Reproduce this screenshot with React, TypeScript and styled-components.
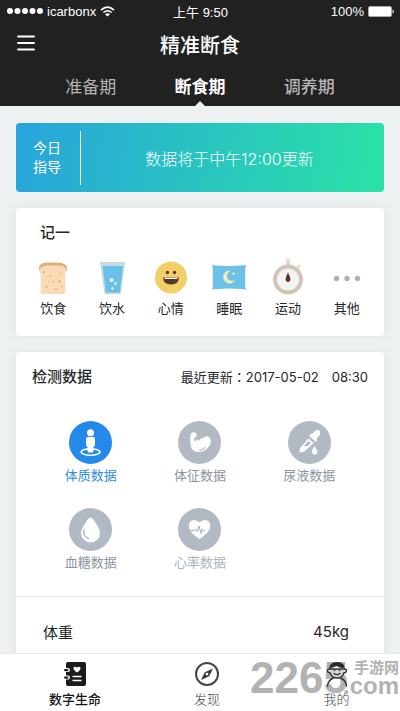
import React from "react";
import styled, { createGlobalStyle } from "styled-components";

const GlobalStyle = createGlobalStyle`
  * { box-sizing: border-box; }
  body {
    margin: 0;
    background: #edf1f2;
    font-family: "Liberation Sans", "Noto Sans CJK SC", sans-serif;
    color: #26272b;
  }
  button { font: inherit; color: inherit; background: none; border: 0; padding: 0; cursor: pointer; }
  h1, h2, p { margin: 0; }
  svg { display: block; }
`;

const Screen = styled.div`
  display: flex;
  flex-direction: column;
  height: 100vh;
`;

const Header = styled.header`
  flex: none;
  background: #212121;
  color: #fff;
`;

const StatusBar = styled.div`
  display: grid;
  grid-template-columns: 1fr auto 1fr;
  align-items: center;
  height: 22px;
  padding: 0 6px 0 7px;
  font-size: 13px;
`;

const StatusGroup = styled.div<{ $end?: boolean }>`
  display: flex;
  align-items: center;
  gap: 4px;
  justify-content: ${(p) => (p.$end ? "flex-end" : "flex-start")};
`;

const NavBar = styled.div`
  display: grid;
  grid-template-columns: 1fr auto 1fr;
  align-items: center;
  height: 48px;
  padding: 0 17px;
`;

const MenuButton = styled.button`
  justify-self: start;
  margin-bottom: 6px;
`;

const Title = styled.h1`
  font-size: 20px;
  line-height: 28px;
  font-weight: 500;
`;

const PhaseTabs = styled.nav`
  display: grid;
  grid-template-columns: repeat(3, 1fr);
  height: 36px;
  padding: 0 36px;
`;

const PhaseTab = styled.button<{ $active?: boolean; $strong?: boolean }>`
  && { color: ${(p) => (p.$active ? "#fff" : "#b4b4b4")}; }
  position: relative;
  font-size: 17px;
  line-height: 24px;
  font-weight: ${(p) => (p.$active ? 700 : p.$strong ? 500 : 400)};
  &::after {
    content: "";
    display: ${(p) => (p.$active ? "block" : "none")};
    position: absolute;
    bottom: 0;
    left: 50%;
    margin-left: -5px;
    border: 5px solid transparent;
    border-top: 0;
    border-bottom-color: #edf1f2;
  }
`;

const Content = styled.main`
  flex: 1;
  min-height: 0;
  overflow-y: auto;
  scrollbar-width: none;
  padding: 17px 16px;
  display: flex;
  flex-direction: column;
  gap: 16px;
`;

const Guide = styled.section`
  flex: none;
  display: flex;
  align-items: center;
  height: 69px;
  border-radius: 4px;
  color: #fff;
  background: linear-gradient(100deg, #28a4dc, #2ae0a8 96%);
`;

const GuideTitle = styled.h2`
  display: flex;
  align-items: center;
  justify-content: center;
  width: 65px;
  height: 54px;
  padding: 0 17px;
  border-right: 1px solid #fff;
  font-size: 14px;
  line-height: 19px;
  font-weight: 400;
`;

const GuideText = styled.p`
  flex: 1;
  padding-right: 6px;
  text-align: center;
  font-family: Inter, "Noto Sans CJK SC", sans-serif;
  font-size: 16px;
  font-weight: 300;
`;

const Card = styled.section`
  flex: none;
  background: #fff;
  border-radius: 4px;
  box-shadow: 0 0 12px rgba(60, 80, 90, 0.07);
`;

const QuickTitle = styled.h2`
  padding: 14px 24px 0;
  font-size: 15px;
  line-height: 22px;
  font-weight: 500;
`;

const QuickGrid = styled.div`
  display: grid;
  grid-template-columns: repeat(6, 1fr);
  padding: 15px 8px 17px;
`;

const QuickButton = styled.button`
  display: flex;
  flex-direction: column;
  align-items: center;
  gap: 2px;
  font-size: 13px;
  line-height: 20px;
`;

const DataHead = styled.div`
  display: flex;
  align-items: center;
  justify-content: space-between;
  padding: 14px 16px 0;
  line-height: 22px;
`;

const DataTitle = styled.h2`
  font-size: 15px;
  font-weight: 500;
`;

const Updated = styled.p`
  font-family: Inter, "Noto Sans CJK TC", sans-serif;
  font-size: 13px;
  white-space: pre;
`;

const DataGrid = styled.div`
  display: grid;
  grid-template-columns: repeat(3, 1fr);
  row-gap: 22px;
  padding: 33px 20px 23px;
`;

const DataButton = styled.button<{ $tone: string }>`
  && { color: ${(p) => p.$tone}; }
  display: flex;
  flex-direction: column;
  align-items: center;
  gap: 2px;
  font-size: 13px;
  line-height: 20px;
`;

const Disc = styled.span<{ $active?: boolean }>`
  width: 43px;
  height: 43px;
  border-radius: 50%;
  background: ${(p) => (p.$active ? "#2589eb" : "#b1b9c3")};
`;

const Measure = styled.div`
  display: flex;
  align-items: center;
  justify-content: space-between;
  height: 70px;
  padding: 0 35px 0 27px;
  border-top: 1px solid #e6e9eb;
  font-family: Inter, "Noto Sans CJK SC", sans-serif;
  font-size: 15px;
`;

const TabBar = styled.nav`
  position: relative;
  flex: none;
  display: grid;
  grid-template-columns: 132fr 132fr 127fr;
  height: 58px;
  padding-left: 9px;
  background: #fff;
  border-top: 1px solid #e6e9eb;
`;

const TabButton = styled.button<{ $active?: boolean }>`
  && { color: ${(p) => (p.$active ? "#151515" : "#444")}; }
  position: relative;
  z-index: 1;
  display: flex;
  flex-direction: column;
  align-items: center;
  padding-top: 7px;
  gap: 3px;
  font-size: 13px;
  line-height: 20px;
  font-weight: ${(p) => (p.$active ? 500 : 300)};
`;

const Watermark = styled.div`
  position: absolute;
  right: 1px;
  top: 4px;
  display: flex;
  color: #b2b2b2;
  font-weight: 700;
  pointer-events: none;
`;

const MarkNumber = styled.span`
  font-size: 44px;
  line-height: 40px;
`;

const MarkSide = styled.span`
  display: flex;
  flex-direction: column;
  padding-top: 2px;
  margin-left: -5px;
`;

const MarkName = styled.span`
  padding-left: 11px;
  font-size: 15px;
  line-height: 16px;
`;

const MarkDomain = styled.span`
  font-size: 24px;
  line-height: 20px;
`;

const Signal = () => (
  <svg width="36" height="8" viewBox="0 0 36 8" fill="#fff" aria-hidden="true">
    {[3, 10.5, 18, 25.5, 33].map((x) => (
      <circle key={x} cx={x} cy="4" r="3" />
    ))}
  </svg>
);

const Wifi = () => (
  <svg width="15" height="11" viewBox="0 0 15 11" fill="none" stroke="#fff" strokeWidth="1.6" aria-hidden="true">
    <path d="M1 4.1Q7.5-1.8 14 4.1M3.4 6.5Q7.5 3 11.6 6.5" />
    <path d="M7.5 10.6 5 8.2Q7.5 6.2 10 8.2Z" fill="#fff" stroke="none" />
  </svg>
);

const Battery = () => (
  <svg width="26" height="11" viewBox="0 0 26 11" aria-hidden="true">
    <rect x=".5" y=".5" width="23" height="10" rx="1.5" fill="#fff" stroke="#aaa" />
    <path d="M24.5 3.5q1.5 0 1.5 2t-1.5 2z" fill="#ccc" />
  </svg>
);

const MenuIcon = () => (
  <svg width="18" height="16" viewBox="0 0 18 16" stroke="#fff" strokeWidth="2" strokeLinecap="round" aria-hidden="true">
    <path d="M1 1.5h16M1 8h16M1 14.5h16" />
  </svg>
);

const Bread = () => (
  <svg width="38" height="38" viewBox="0 0 38 38" aria-hidden="true">
    <path d="M5 9Q5 4 13 3.500h11q9 .5 9 6 0 3-2 5H7q-2-2-2-5.500z" fill="#dcae7b" />
    <path d="M5.500 10.500Q7 7 14 6.500h11q6 .5 7.500 4-.2 3.500-1.500 5l.5 17q0 2.500-2.500 2.500H9q-2.500 0-2.500-2.500l.5-17q-1.500-1.500-1.500-5z" fill="#fadbb6" />
    <g fill="#dfac79">
      <circle cx="10" cy="13" r="1" /><circle cx="16" cy="17" r=".9" /><circle cx="27" cy="14" r=".8" />
      <circle cx="19.500" cy="22.500" r=".9" /><circle cx="25.500" cy="22.500" r="1.200" /><circle cx="12.500" cy="28" r="1.100" />
      <circle cx="22" cy="30.500" r=".9" /><circle cx="28" cy="27.500" r=".8" /><circle cx="14.500" cy="23" r=".6" />
    </g>
  </svg>
);

const Water = () => (
  <svg width="38" height="38" viewBox="0 0 38 38" aria-hidden="true">
    <path d="M7 3h25l-4 32H11.500z" fill="#c9d9e2" />
    <path d="M9.500 7h20.500L26.800 33.500H13z" fill="#68c0e8" />
    <g fill="#e3f5fd">
      <circle cx="18.500" cy="21" r="2" /><circle cx="22.500" cy="24.500" r="1.400" /><circle cx="19.500" cy="29.500" r="1.300" />
    </g>
  </svg>
);

const Smile = () => (
  <svg width="38" height="38" viewBox="0 0 38 38" aria-hidden="true">
    <circle cx="19" cy="18.500" r="16" fill="#f3cf68" />
    <g fill="#5d3526">
      <circle cx="15.500" cy="13.500" r="1.700" /><circle cx="22.500" cy="13.500" r="1.700" />
      <path d="M11 18.500h16q-.5 7-8 7t-8-7z" />
    </g>
    <path d="M12.200 18.800h13.600l-.6 1.200H12.800z" fill="#fff" />
  </svg>
);

const Pillow = () => (
  <svg width="38" height="38" viewBox="0 0 38 38" aria-hidden="true">
    <path d="M2 6l4 .5q13 .8 26 0l4-.5q-.3 3-1 4 .8 1 0 2.500.8 1.200 0 2.700.8 1.300 0 2.800.8 1.200 0 2.700.8 1.300 0 2.800.8 1.500 0 2.500l1 4.500-4-.5q-13-.8-26 0l-4 .5 1-4.500q-.8-1.200 0-2.500-.8-1.300 0-2.800-.8-1.200 0-2.700-.8-1.300 0-2.800-.8-1.200 0-2.700-.8-1.300 0-2.500z" fill="#6cc1e9" />
    <path d="M20.500 11.500a6.500 6.500 0 1 0 4.500 10q-7.500 1.500-8-4 0-4 3.500-6z" fill="#f3e9b6" />
    <path d="M23.500 12.500l.6 1.600 1.600.6-1.600.6-.6 1.600-.6-1.600-1.600-.6 1.600-.6z" fill="#f3e9b6" />
  </svg>
);

const Watch = () => (
  <svg width="38" height="38" viewBox="0 0 38 38" aria-hidden="true">
    <path d="M17 0h4v7h-4zM27 8l3-3 2 2-3 3z" fill="#e5ddd2" />
    <circle cx="19" cy="20.500" r="13" fill="#f4f4f5" stroke="#d1c4b4" strokeWidth="4" />
    <path d="M19 13.500q3 6 2.300 7.700-.6 1.800-2.300 1.800t-2.300-1.800Q16 19.500 19 13.500z" fill="#642f24" />
  </svg>
);

const Dots = () => (
  <svg width="38" height="38" viewBox="0 0 38 38" fill="#a9b2be" aria-hidden="true">
    <circle cx="8.500" cy="19.500" r="2.700" /><circle cx="19" cy="19.500" r="2.700" /><circle cx="29.500" cy="19.500" r="2.700" />
  </svg>
);

const Body = () => (
  <svg viewBox="0 0 43 43" aria-hidden="true">
    <ellipse cx="21.500" cy="31" rx="9.500" ry="3.300" fill="none" stroke="#fff" strokeWidth="1.500" />
    <circle cx="21.500" cy="11.800" r="3.500" fill="#fff" />
    <path d="M19 16h5q2 0 2 2v6q0 1.500-1.500 1.500V30q0 1.500-1.500 1.500h-3q-1.500 0-1.500-1.500v-4.500Q17 25.500 17 24v-6q0-2 2-2z" fill="#fff" />
  </svg>
);

const Muscle = () => (
  <svg viewBox="0 0 43 43" aria-hidden="true">
    <path d="M13 12.500q2-2 4.500-.8 2.200 1.500.8 3.800l-2 1.500q-.5 2 .7 3.500l2.500-2.500.5 2q2.500-3 6-3.500 3.500-2.500 6 .5 2 3.500-.5 7.500-4 6.500-10 6.500-7 0-8.500-5-1.500-7.500 0-13.500z" fill="#fff" />
    <path d="M21.500 29q3.500.3 5.500-2.500" fill="none" stroke="#b1b9c3" strokeWidth="1.200" strokeLinecap="round" />
  </svg>
);

const Dropper = () => (
  <svg viewBox="0 0 43 43" aria-hidden="true">
    <path d="M24.500 12.500l2.500-2.500q3-2 5 .2 1.200 2.300-.5 4.300l-3 3 .8 1.700-1.800 1.500-6.500-6 1.700-1.800z" fill="#fff" />
    <path d="M20.500 17.500l5 4.500-8.500 8q-2 1.500-4 1l-1 .7-.9-.8.7-1q-.5-2.400 1.200-4z" fill="#fff" />
    <path d="M20.700 20l2 2-3 3H15.700z" fill="#b1b9c3" />
    <path d="M26.500 25q3 4.500 3 5.700a2.800 2.800 0 0 1-5.600 0q0-1.500 2.600-5.700z" fill="#fff" />
  </svg>
);

const Drop = () => (
  <svg viewBox="0 0 43 43" aria-hidden="true">
    <path d="M21.500 9.500q2 0 5.500 6 4 6 4 9.500a9.500 9.500 0 0 1-19 0q0-3.500 4-9.500 3.500-6 5.500-6z" fill="#fff" />
    <path d="M15 21.500q-1.500 6.500 4.500 9" fill="none" stroke="#b1b9c3" strokeWidth="1.400" strokeLinecap="round" />
  </svg>
);

const Heart = () => (
  <svg viewBox="0 0 43 43" aria-hidden="true">
    <path d="M21.500 31Q11 24.500 10.700 18q0-5.700 5.300-6 3.500 0 5.500 2.500 2-2.500 5.500-2.500 5.300.3 5.300 6Q32 24.500 21.500 31z" fill="#fff" />
    <path d="M11 22.500h6l1-1.500 1.500 2.500 1.500-5.500 2 7.500 1.500-4.500.8 1.500H27" fill="none" stroke="#a9b2bd" strokeWidth="1" strokeLinejoin="round" />
  </svg>
);

const Notebook = () => (
  <svg width="26" height="26" viewBox="0 0 26 26" aria-hidden="true">
    <rect x="4" y="1" width="20" height="24" rx="2" fill="#1b1b1b" />
    {[7.5, 15].map((y) => (
      <g key={y}>
        <rect x="2" y={y - 0.5} width="6" height="4" rx="2" fill="#fff" />
        <rect x="2" y={y + 0.4} width="4.500" height="2.300" rx="1.100" fill="#1b1b1b" />
      </g>
    ))}
    <path d="M15 11.500q-4-2.500-3.500-4.700.8-2 3.500-.3 2.700-1.700 3.500.3.5 2.200-3.500 4.700z" fill="#fff" />
    <path d="M10.500 15.500h9M10.500 19.500h9" stroke="#fff" strokeWidth="1.500" />
  </svg>
);

const Compass = () => (
  <svg width="26" height="26" viewBox="0 0 26 26" aria-hidden="true">
    <circle cx="13" cy="13" r="11" fill="none" stroke="#444" strokeWidth="2" />
    <path fillRule="evenodd" d="M19 7.500l-3.800 7.700-8.200 3.800 3.800-7.700zM13 11.700a1.400 1.400 0 1 0 0 2.800 1.400 1.400 0 0 0 0-2.800z" fill="#3a3a3a" />
  </svg>
);

const Person = () => (
  <svg width="26" height="26" viewBox="0 0 26 26" fill="none" stroke="#333" strokeWidth="1.400" strokeLinecap="round" aria-hidden="true">
    <path d="M5.500 8q-2.300 0-2 2 .3 2 2.500 1.700Q8 17 13 17t7-5.300q2.200.3 2.500-1.700.3-2-2-2z" fill="#d4d4d4" />
    <path d="M5 8.500Q5 1 13 1t8 7.500l-1.500-1.700q-4 .6-7-2-3 2-5.500 2z" fill="#2b2b2b" stroke="none" />
    <path d="M10 12.500q3 2.300 6 0M3.500 25q.7-6 6-8M22.500 25q-.7-6-6-8" />
    <path d="M10.500 9.300v.2M15.500 9.300v.2" />
  </svg>
);

const quickItems = [
  { label: "饮食", Icon: Bread },
  { label: "饮水", Icon: Water },
  { label: "心情", Icon: Smile },
  { label: "睡眠", Icon: Pillow },
  { label: "运动", Icon: Watch },
  { label: "其他", Icon: Dots },
];

const dataItems = [
  { label: "体质数据", Icon: Body, tone: "#2f8be0", active: true },
  { label: "体征数据", Icon: Muscle, tone: "#8b949e" },
  { label: "尿液数据", Icon: Dropper, tone: "#8b949e" },
  { label: "血糖数据", Icon: Drop, tone: "#8b949e" },
  { label: "心率数据", Icon: Heart, tone: "#aab3bd" },
];

export default function App() {
  return (
    <Screen>
      <GlobalStyle />
      <Header>
        <StatusBar>
          <StatusGroup>
            <Signal />
            <span>icarbonx</span>
            <Wifi />
          </StatusGroup>
          <span>上午 9:50</span>
          <StatusGroup $end>
            <span>100%</span>
            <Battery />
          </StatusGroup>
        </StatusBar>
        <NavBar>
          <MenuButton aria-label="菜单"><MenuIcon /></MenuButton>
          <Title>精准断食</Title>
        </NavBar>
        <PhaseTabs>
          <PhaseTab>准备期</PhaseTab>
          <PhaseTab $active>断食期</PhaseTab>
          <PhaseTab $strong>调养期</PhaseTab>
        </PhaseTabs>
      </Header>
      <Content>
        <Guide>
          <GuideTitle>今日指导</GuideTitle>
          <GuideText>数据将于中午12:00更新</GuideText>
        </Guide>
        <Card>
          <QuickTitle>记一</QuickTitle>
          <QuickGrid>
            {quickItems.map(({ label, Icon }) => (
              <QuickButton key={label}><Icon />{label}</QuickButton>
            ))}
          </QuickGrid>
        </Card>
        <Card>
          <DataHead>
            <DataTitle>检测数据</DataTitle>
            <Updated>最近更新：<time dateTime="2017-05-02T08:30">2017-05-02　08:30</time></Updated>
          </DataHead>
          <DataGrid>
            {dataItems.map(({ label, Icon, tone, active }) => (
              <DataButton key={label} $tone={tone}>
                <Disc $active={active}><Icon /></Disc>
                {label}
              </DataButton>
            ))}
          </DataGrid>
          <Measure><span>体重</span><span>45kg</span></Measure>
        </Card>
      </Content>
      <TabBar>
        <TabButton $active><Notebook />数字生命</TabButton>
        <TabButton><Compass />发现</TabButton>
        <TabButton><Person />我的</TabButton>
        <Watermark>
          <MarkNumber>2265</MarkNumber>
          <MarkSide>
            <MarkName>手游网</MarkName>
            <MarkDomain>.com</MarkDomain>
          </MarkSide>
        </Watermark>
      </TabBar>
    </Screen>
  );
}
